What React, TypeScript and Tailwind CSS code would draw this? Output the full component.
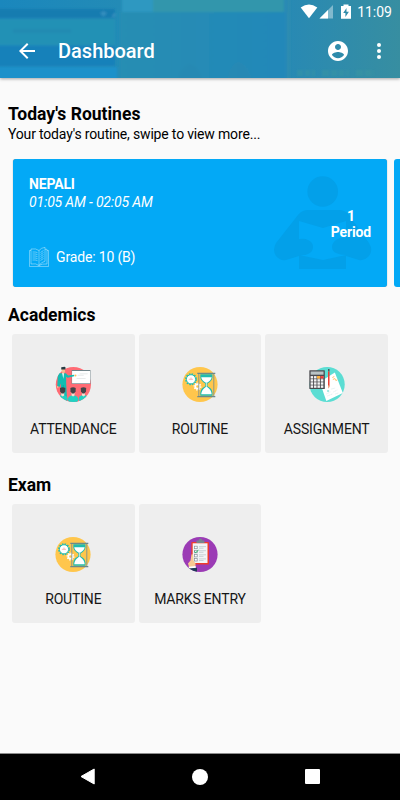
import React from "react";

interface TileProps {
  label: string;
  icon: React.ReactNode;
}

function AttendanceIcon() {
  return (
    <svg width="40" height="40" viewBox="8.33 10 40 40">
      <defs>
        <clipPath id="attendance-clip">
          <circle cx="28.7" cy="29.5" r="17.6" />
        </clipPath>
      </defs>
      <circle cx="28.7" cy="29.5" r="17.6" fill="#ff6b74" />
      {/* Board */}
      <rect x="27" y="15" width="18.8" height="14" fill="#71858b" />
      <rect x="27.4" y="16" width="18" height="12.3" fill="#fff" />
      <path d="M35 18.8h8M33 20.3h6M32 23.5h9" stroke="#dfe2e4" strokeWidth=".7" />
      {/* Teacher */}
      <path d="M14.8 18.3h6.4l2.3 2.2 6-.8v1.5l-6.7 1.5-1.3-.9v6.5l.8 14h-6.1v-14l-1.2 3.5h-2.4l.5-10.5z" fill="#12bdb2" />
      <path d="M17.5 18h1.8l-.6 6z" fill="#fff" />
      <path d="M18.6 30v10" stroke="#0b9b93" strokeWidth=".6" />
      <path d="M17 13.5h3.4v3l-1 2h-1.4l-1-2z" fill="#f4bd91" />
      <path d="M16.6 14.4v-2.2l3.4-.4 1 .9-.4 1.7z" fill="#273b42" />
      <circle cx="30.8" cy="20.5" r="1" fill="#ffbf5c" />
      <circle cx="13" cy="32" r=".9" fill="#f4bd91" />
      {/* Students */}
      <g clipPath="url(#attendance-clip)">
        <ellipse cx="18" cy="44" rx="5" ry="4" fill="#20d2c3" />
        <ellipse cx="28.4" cy="44.5" rx="5.2" ry="4.2" fill="#20d2c3" />
        <ellipse cx="39" cy="44" rx="5" ry="4" fill="#20d2c3" />
      </g>
      {[18, 28.4, 38.8].map((x) => (
        <g key={x}>
          <path d={`M${x - 1.5} 36.5h3v4l-1.5 1-1.5-1z`} fill="#f6ddcf" />
          <path d={`M${x - 2.7} 33q2.7-1.4 5.4 0l-.2 3.5-1.5 2h-2l-1.5-2z`} fill="#414448" />
        </g>
      ))}
    </svg>
  );
}

function RoutineIcon() {
  return (
    <svg width="40" height="40" viewBox="10 10 40 40">
      <circle cx="30" cy="29.5" r="17.6" fill="#ffc64c" />
      {/* Gears */}
      <circle cx="21" cy="24.3" r="5.2" fill="none" stroke="#22bcb1" strokeWidth="1.6" strokeDasharray="1.5 1.22" />
      <circle cx="21" cy="24.3" r="4.6" fill="#fff" stroke="#22bcb1" strokeWidth="1" />
      <path d="M18.8 24.3H23M21 22.5v1.8" stroke="#ee8f88" strokeWidth=".6" />
      <circle cx="27.5" cy="31.5" r="3.4" fill="none" stroke="#fff" strokeWidth="1.2" strokeDasharray="1.4 1.2" />
      <circle cx="27.5" cy="31.5" r="2.2" fill="none" stroke="#fff" strokeWidth="1.7" />
      {/* Hourglass */}
      <path d="M28.8 18.5v23M43.8 18.5v23" stroke="#80918c" strokeWidth=".9" />
      <path d="M27.3 18.4h18M27.3 41.6h18" stroke="#6c898b" strokeWidth="1.1" />
      <path d="M30.3 19.2h12.2v3q-.5 4-5 6.3v2.7q4.5 2 5 6.3v3.2H30.3v-3.2q.5-4.3 5-6.3v-2.7q-4.5-2.3-5-6.3z" fill="#20bbb0" />
      <path d="M31.2 22.3h10.5q-.5 3.2-4.6 5.4h-1.3q-4.1-2.2-4.6-5.4zM35.8 32h1.3q4.1 2.5 4.6 7.3H31.2q.5-4.8 4.6-7.3z" fill="#fff" />
      <path d="M36.4 28v4" stroke="#e8faf8" strokeWidth=".8" />
    </svg>
  );
}

function AssignmentIcon() {
  return (
    <svg width="40" height="40" viewBox="9.67 10 40 40">
      <circle cx="29.8" cy="29.5" r="17.6" fill="#5bddd3" />
      {/* Sheet */}
      <path d="M22.5 27l15-9.5 8 20.5-16.5 8z" fill="#fff" />
      <path d="M35.5 24.5l2-1 1 2 1.5-.6M35 22.5l2-1" fill="none" stroke="#ffc069" strokeWidth="1" />
      <path d="M29 39l4-2M30 41l5-2M34 34l4-1M36 37l4-2M38 39l3-1" stroke="#d6e5e8" strokeWidth=".7" strokeDasharray="1.4 .6" />
      <path d="M29.8 36h2" stroke="#4fcfc5" strokeWidth="1" />
      {/* Calculator */}
      <rect x="12" y="15.3" width="15.5" height="18.7" rx=".5" fill="#4b4b50" />
      <rect x="13.3" y="16.5" width="12.9" height="3.2" fill="#b9c3c5" />
      {[21.1, 24.2, 27.3, 30.4].map((y) => (
        <g key={y} fill="#f4f4f4">
          <rect x="13.3" y={y} width="2.5" height="2.4" />
          <rect x="16.7" y={y} width="2.5" height="2.4" />
          <rect x="20.1" y={y} width="2.5" height="2.4" />
          <rect x="23.5" y={y} width="2.5" height="2.4" />
        </g>
      ))}
      <rect x="19.7" y="21.1" width="3" height="2.4" fill="#ffad32" />
      <rect x="23.1" y="21.1" width="3" height="2.4" fill="#ed3b35" />
      {/* Pencil */}
      <path d="M30.7 14h1.5v2.5h-1.5z" fill="#4c565b" />
      <path d="M30.7 16.5h1.5V31l-.75 2.5-.75-2.5z" fill="#ee3a2f" />
      <path d="M30.7 30.5h1.5l-.75 3z" fill="#efc995" />
    </svg>
  );
}

function MarksIcon() {
  return (
    <svg width="40" height="40" viewBox="10 10 40 40">
      <defs>
        <clipPath id="marks-clip">
          <circle cx="30" cy="29.5" r="17.6" />
        </clipPath>
      </defs>
      <circle cx="30" cy="29.5" r="17.6" fill="#9b3bb5" />
      {/* Clipboard */}
      <rect x="21.3" y="17" width="17.7" height="22.5" rx=".8" fill="#ee3a2d" />
      <rect x="22.7" y="18.3" width="14.8" height="19.7" fill="#f2f5f7" />
      <path d="M26.5 17v-1.6h2.2c0-2.7 3.5-2.7 3.5 0h2.2V18h-7.9z" fill="#76858d" />
      {[21.2, 25.3, 29.4, 33.5].map((y) => (
        <g key={y}>
          <rect x="24.4" y={y} width="2.8" height="2.5" fill="#fff" stroke="#85919a" strokeWidth=".7" />
          <path d={`M29 ${y + 0.4}h7M29 ${y + 2}h4.5`} stroke="#b9c4c9" strokeWidth=".7" />
        </g>
      ))}
      <path d="M24.5 26.3l1.3 1.5 2.7-3" fill="none" stroke="#28b76b" strokeWidth="1" />
      {/* Hand */}
      <g clipPath="url(#marks-clip)">
        <path d="M21.5 29.5q1.5-1 1.7 1l.3 5 2 3v4l-6 1-1.5-5 2.5-3z" fill="#f7ca93" />
        <path d="M18.5 41.8l7-.8.5 2.2-6.5 1z" fill="#fff" />
        <path d="M18 43.5l9-.8v4h-7z" fill="#203b57" />
      </g>
    </svg>
  );
}

function Tile({ label, icon }: TileProps) {
  return (
    <div className="flex h-[119px] flex-col items-center rounded-[3px] bg-[#eeeeee] pt-[31px]">
      {icon}
      <span className="mt-[14px] text-[14px] leading-5 tracking-[-0.17px] text-[#161616]">{label}</span>
    </div>
  );
}

function HeaderBackdrop() {
  return (
    <svg className="absolute inset-0" width="400" height="78" viewBox="0 0 400 78">
      <defs>
        <linearGradient id="header-base" x1="0" x2="1" y1="0" y2="0">
          <stop offset="0" stopColor="#1a87bd" />
          <stop offset=".3" stopColor="#238bb6" />
          <stop offset=".7" stopColor="#2789b5" />
          <stop offset="1" stopColor="#378ea1" />
        </linearGradient>
        <linearGradient id="header-middle" x1="0" x2="1" y1="0" y2="0">
          <stop offset="0" stopColor="#288eb3" />
          <stop offset="1" stopColor="#2288b9" />
        </linearGradient>
        <filter id="soften">
          <feGaussianBlur stdDeviation=".8" />
        </filter>
      </defs>
      <rect width="400" height="78" fill="url(#header-base)" />
      <g filter="url(#soften)">
        <rect x="-4" y="9" width="119" height="9" fill="#147bb0" />
        <rect x="-4" y="19" width="119" height="26" fill="#2491b5" />
        <rect x="-4" y="46" width="119" height="20" fill="#1681ba" />
        <rect x="-4" y="67" width="121" height="15" fill="#1f91ca" />
        <rect x="120" y="12" width="166" height="70" fill="url(#header-middle)" />
        <rect x="122" y="-4" width="31" height="16" fill="#2f98c1" />
        <rect x="153" y="-4" width="131" height="16" fill="#3096ac" />
        <rect x="288" y="-4" width="1.5" height="86" fill="#338fae" />
        <path d="M13 31h58" stroke="#1f86b0" strokeWidth="4" opacity=".5" />
        <path d="M100 13l3.5-2 3.5 2-3.5 4zM111 17l4-5v5z" fill="#348fbe" />
        <path d="M178 80q2-14 12-16q9 2 12 16M228 80q2-16 10-18q10 2 14 18" fill="#2e86ae" opacity=".35" />
        <path d="M297 73h77" stroke="#3d9c9d" strokeWidth="6" strokeDasharray="6 2 5 2 3 7 7 2" opacity=".35" />
      </g>
    </svg>
  );
}

function Header() {
  return (
    <header className="relative h-[78px] shrink-0 text-white shadow-[0_1px_3px_rgba(0,0,0,0.35)]">
      <HeaderBackdrop />
      <div className="relative flex h-6 items-center justify-end pr-[8px]">
        <svg width="52" height="16" viewBox="300 4 52 16" fill="#fff">
          <path d="M300.7 7.5Q309 1.5 317.3 7.5L309 18.3z" />
          <path d="M333 5v13.5h-13.5z" opacity=".4" />
          <path d="M328 10v8.5h-8.5z" />
          <path fillRule="evenodd" d="M343.5 4.5h5v1.5h2.5v12.7h-10V6h2.5zM346.5 8l-3.3 5h2.2v4l3.5-5.3h-2.4z" />
        </svg>
        <span className="ml-[5px] text-[14px] leading-4">11:09</span>
      </div>
      <div className="relative flex h-[54px] items-center pr-[15px] pl-[15px]">
        <svg width="24" height="24" viewBox="0 0 24 24" fill="#fff">
          <path d="M20 11H7.83l5.59-5.59L12 4l-8 8 8 8 1.41-1.41L7.83 13H20v-2z" />
        </svg>
        <h1 className="ml-[19px] flex-1 text-[20px] font-medium">Dashboard</h1>
        <svg width="24" height="24" viewBox="0 0 24 24" fill="#fff">
          <path d="M12 2C6.48 2 2 6.48 2 12s4.48 10 10 10 10-4.48 10-10S17.52 2 12 2zm0 3c1.66 0 3 1.34 3 3s-1.34 3-3 3-3-1.34-3-3 1.34-3 3-3zm0 14.2c-2.5 0-4.71-1.28-6-3.22.03-1.99 4-3.08 6-3.08 1.99 0 5.97 1.09 6 3.08-1.29 1.94-3.5 3.22-6 3.22z" />
        </svg>
        <svg className="-mr-[6px] ml-[17px]" width="24" height="24" viewBox="0 0 24 24" fill="#fff">
          <circle cx="12" cy="6" r="2" />
          <circle cx="12" cy="12" r="2" />
          <circle cx="12" cy="18" r="2" />
        </svg>
      </div>
    </header>
  );
}

function BookIcon() {
  return (
    <svg width="20" height="20" viewBox="0 0 20 20" fill="none" stroke="#fff" strokeOpacity=".55" strokeWidth=".7">
      <path d="M.5 3.5v16h19v-16M.5 3.5H2M18 3.5h1.5M2 2v15q5-1 8 1.5v-15Q7 1.2 2 2zM10 3.5q2-2.7 6-3.2v13.9q-4 1-6 4.3M16 2.3h2V17q-5-.5-8 1.5" />
      <path d="M3.5 5q3-.3 5 .6M3.5 7q3-.3 5 .6M3.5 9q3-.3 5 .6M3.5 11q3-.3 5 .6M3.5 13q3-.3 5 .6M11.5 5.5l3-2M11.5 7.5l3-2M11.5 9.5l3-2M11.5 11.5l3-2M11.5 13.5l3-2" />
    </svg>
  );
}

function RoutineCard() {
  return (
    <div className="relative h-32 w-[374px] shrink-0 rounded-[3px] bg-[#03a9f6] text-white shadow-[0_0_1px_rgba(0,0,0,0.5)]">
      {/* Reader watermark */}
      <svg className="absolute top-[17px] right-[14px]" width="100" height="94" viewBox="273 176 100 94" fill="#03a0e9">
        <circle cx="322.7" cy="191.5" r="15.3" />
        <path d="M308 210h31q6 0 10 5l20 28q5 8-1 14-4 4-9 3l-13-4v13h-47v-13l-13 4q-6 1-10-4-4-6 0-13l22-28q4-5 10-5z" />
        <path d="M299 221l24 7 23-7v17q-6-1-10 2-4 3-4 7t4 6 10 2l-23 5-24-5q5 1 9-1 5-2 5-7t-5-7q-3-2-9-1z" fill="#03a9f6" />
      </svg>
      <div className="relative flex h-full items-center justify-between px-4 tracking-[-0.16px]">
        <div className="flex h-full flex-col pt-[16px]">
          <span className="text-[14px] leading-[18px] font-bold">NEPALI</span>
          <span className="text-[14px] leading-[18px] italic">01:05 AM - 02:05 AM</span>
          <div className="mt-[36px] flex items-center gap-[7px]">
            <BookIcon />
            <span className="text-[14px] leading-5">Grade: 10 (B)</span>
          </div>
        </div>
        <div className="pt-[2px] text-center text-[14px] leading-4 font-bold">
          <div>1</div>
          <div>Period</div>
        </div>
      </div>
    </div>
  );
}

export default function App() {
  return (
    <div className="flex h-[800px] w-[400px] flex-col overflow-hidden bg-[#fafafa] font-['Roboto',sans-serif] text-black">
      <Header />

      <main className="flex-1">
        <section className="pt-[25px]">
          <h2 className="px-2 text-[17.5px] leading-[22px] font-bold">Today's Routines</h2>
          <p className="px-2 text-[14px] leading-[18px] tracking-[-0.17px]">Your today's routine, swipe to view more...</p>
          <div className="mt-4 flex gap-[6.5px] overflow-hidden pl-[13px]">
            <RoutineCard />
            <div className="h-32 w-4 shrink-0 rounded-l-[3px] bg-[#03a9f6]" />
          </div>
        </section>

        <section className="pt-[17px]">
          <h2 className="px-2 text-[17.5px] leading-[22px] font-bold">Academics</h2>
          <div className="mt-2 grid grid-cols-3 gap-1 px-3">
            <Tile label="ATTENDANCE" icon={<AttendanceIcon />} />
            <Tile label="ROUTINE" icon={<RoutineIcon />} />
            <Tile label="ASSIGNMENT" icon={<AssignmentIcon />} />
          </div>
        </section>

        <section className="pt-[21px]">
          <h2 className="px-2 text-[17.5px] leading-[22px] font-bold">Exam</h2>
          <div className="mt-2 grid grid-cols-3 gap-1 px-3">
            <Tile label="ROUTINE" icon={<RoutineIcon />} />
            <Tile label="MARKS ENTRY" icon={<MarksIcon />} />
          </div>
        </section>
      </main>

      <nav className="flex h-[47px] items-center justify-between border-t border-[#8d8d8d] bg-black px-[80px] pb-px">
        <svg width="15" height="17" viewBox="0 0 15 17" fill="#fff">
          <path d="M14.2 1v15L1 8.5z" stroke="#fff" strokeLinejoin="round" />
        </svg>
        <div className="size-4 rounded-full bg-white" />
        <div className="size-[15px] rounded-[1px] bg-white" />
      </nav>
    </div>
  );
}
